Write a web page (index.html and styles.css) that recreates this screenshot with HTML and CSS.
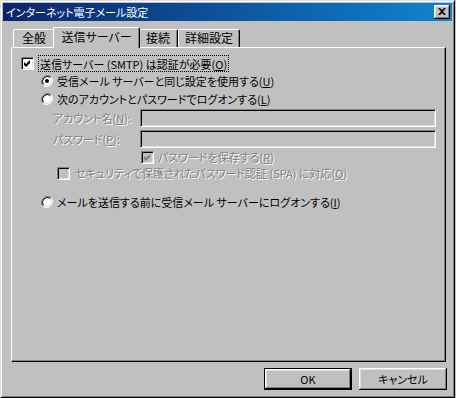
FILE: index.html
```html
<!DOCTYPE html>
<html lang="ja">
<head>
    <meta charset="UTF-8">
    <title>インターネット電子メール設定</title>
    <link rel="stylesheet" href="styles.css">
</head>
<body>
    <div class="window">
        <div class="titlebar">
            <span class="title">インターネット電子メール設定</span>
            <div class="close">
                <svg width="8" height="7" viewBox="0 0 8 7"><path d="M0 0h2l2 2 2-2h2L5 3.5 8 7H6L4 5 2 7H0l3-3.5z" fill="#000"/></svg>
            </div>
        </div>

        <div class="body">
            <div class="tabs">
                <div class="tab tab-general">全般</div>
                <div class="tab tab-send active">送信サーバー</div>
                <div class="tab tab-conn">接続</div>
                <div class="tab tab-adv">詳細設定</div>
            </div>

            <div class="panel">
                <div class="row">
                    <span class="check">
                        <svg width="7" height="7" viewBox="0 0 7 7"><path d="M0 2l2 2 4-4v3l-4 4-2-2z" fill="#000"/></svg>
                    </span>
                    <span class="focus">送信サーバー (SMTP) は認証が必要(<u>O</u>)</span>
                </div>

                <div class="row indent">
                    <span class="radio">
                        <svg width="12" height="12" viewBox="0 0 12 12">
                            <circle cx="6" cy="6" r="5" fill="#fff"/>
                            <path d="M1.8 10.2A6 6 0 0 1 10.2 1.8" fill="none" stroke="#808080"/>
                            <path d="M10.2 1.8A6 6 0 0 1 1.8 10.2" fill="none" stroke="#fff"/>
                            <path d="M2.5 9.5A5 5 0 0 1 9.5 2.5" fill="none" stroke="#000"/>
                            <path d="M9.5 2.5A5 5 0 0 1 2.5 9.5" fill="none" stroke="#dfdfdf"/>
                            <circle cx="6" cy="6" r="2" fill="#000"/>
                        </svg>
                    </span>
                    <span class="text">受信メール サーバーと同じ設定を使用する(<u>U</u>)</span>
                </div>

                <div class="row indent">
                    <span class="radio">
                        <svg width="12" height="12" viewBox="0 0 12 12">
                            <circle cx="6" cy="6" r="5" fill="#fff"/>
                            <path d="M1.8 10.2A6 6 0 0 1 10.2 1.8" fill="none" stroke="#808080"/>
                            <path d="M10.2 1.8A6 6 0 0 1 1.8 10.2" fill="none" stroke="#fff"/>
                            <path d="M2.5 9.5A5 5 0 0 1 9.5 2.5" fill="none" stroke="#000"/>
                            <path d="M9.5 2.5A5 5 0 0 1 2.5 9.5" fill="none" stroke="#dfdfdf"/>
                        </svg>
                    </span>
                    <span class="text">次のアカウントとパスワードでログオンする(<u>L</u>)</span>
                </div>

                <div class="field field-first">
                    <label class="disabled">アカウント名(<u>N</u>):</label>
                    <div class="input"></div>
                </div>
                <div class="field">
                    <label class="disabled">パスワード(<u>P</u>):</label>
                    <div class="input"></div>
                </div>

                <div class="row small save-row">
                    <span class="check off">
                        <svg width="7" height="7" viewBox="0 0 7 7"><path d="M0 2l2 2 4-4v3l-4 4-2-2z" fill="#808080"/></svg>
                    </span>
                    <span class="text disabled">パスワードを保存する(<u>R</u>)</span>
                </div>

                <div class="row small spa-row">
                    <span class="check off"></span>
                    <span class="text disabled">セキュリティで保護されたパスワード認証 (SPA) に対応(<u>Q</u>)</span>
                </div>

                <div class="row indent last-row">
                    <span class="radio">
                        <svg width="12" height="12" viewBox="0 0 12 12">
                            <circle cx="6" cy="6" r="5" fill="#fff"/>
                            <path d="M1.8 10.2A6 6 0 0 1 10.2 1.8" fill="none" stroke="#808080"/>
                            <path d="M10.2 1.8A6 6 0 0 1 1.8 10.2" fill="none" stroke="#fff"/>
                            <path d="M2.5 9.5A5 5 0 0 1 9.5 2.5" fill="none" stroke="#000"/>
                            <path d="M9.5 2.5A5 5 0 0 1 2.5 9.5" fill="none" stroke="#dfdfdf"/>
                        </svg>
                    </span>
                    <span class="text">メールを送信する前に受信メール サーバーにログオンする(<u>I</u>)</span>
                </div>
            </div>

            <div class="buttons">
                <div class="button default">OK</div>
                <div class="button">キャンセル</div>
            </div>
        </div>
    </div>
</body>
</html>
```

FILE: styles.css
```css
* {
    margin: 0;
    padding: 0;
    box-sizing: border-box;
}

body {
    background: #c0c0c0;
    font-family: "Noto Sans CJK JP", sans-serif;
    font-size: 11px;
    line-height: 14px;
    color: #000;
    font-feature-settings: "palt";
}

u {
    text-decoration: underline;
    text-underline-offset: 1px;
}

.window {
    width: 455px;
    height: 398px;
    background: #c0c0c0;
    border: 1px solid;
    border-color: #dfdfdf #000 #000 #dfdfdf;
    box-shadow: inset 1px 1px #fff, inset -1px -1px #808080;
    padding: 2px;
    display: flex;
    flex-direction: column;
}

.titlebar {
    height: 18px;
    background: linear-gradient(to right, #0a246a, #1084d0);
    display: flex;
    align-items: center;
    padding: 0 2px 0 3px;
}

.title {
    color: #fff;
}

.close {
    margin-left: auto;
    width: 16px;
    height: 14px;
    background: #c0c0c0;
    box-shadow: inset -1px -1px #000, inset 1px 1px #fff, inset -2px -2px #808080, inset 2px 2px #dfdfdf;
    display: flex;
    align-items: center;
    justify-content: center;
    padding-bottom: 1px;
}

.body {
    flex: 1;
    display: flex;
    flex-direction: column;
    padding: 6px 6px 0 8px;
}

/* tabs */
.tabs {
    display: flex;
    align-items: flex-end;
    padding-left: 2px;
}

.tab {
    height: 18px;
    background: #c0c0c0;
    border-top: 1px solid #fff;
    border-left: 1px solid #fff;
    border-right: 1px solid #000;
    border-radius: 2px 2px 0 0;
    box-shadow: inset -1px 0 #808080;
    text-align: center;
    font-size: 12px;
    padding-top: 1px;
}

.tab-general { width: 42px; }
.tab-send { width: 83px; }
.tab-conn { width: 40px; }
.tab-adv { width: 62px; }

.tab.active {
    width: 87px;
    height: 21px;
    margin: 0 -2px -1px;
    position: relative;
    z-index: 1;
    padding-top: 2px;
}

/* panel */
.panel {
    width: 435px;
    height: 315px;
    border: 1px solid;
    border-color: #fff #000 #000 #fff;
    box-shadow: inset -1px -1px #808080;
    padding: 6px 0 0 9px;
}

.row {
    display: flex;
    align-items: center;
    height: 18px;
}

.row.small {
    height: 16px;
}

.indent {
    margin-left: 20px;
}

.check {
    width: 13px;
    height: 13px;
    background: #fff;
    border: 1px solid;
    border-color: #808080 #fff #fff #808080;
    box-shadow: inset 1px 1px #000, inset -1px -1px #dfdfdf;
    display: flex;
    align-items: center;
    justify-content: center;
    flex-shrink: 0;
}

.check.off {
    background: #c0c0c0;
}

.focus {
    margin-left: 4px;
    border: 1px dotted #000;
    padding: 1px 1px 0;
    line-height: 14px;
}

.radio {
    width: 12px;
    height: 12px;
    display: flex;
    flex-shrink: 0;
}

.text {
    margin-left: 4px;
}

.disabled {
    color: #808080;
    text-shadow: 1px 1px 0 #fff;
}

.field {
    display: flex;
    align-items: center;
    margin-left: 32px;
    margin-top: 3px;
}

.field-first {
    margin-top: 1px;
}

.field label {
    width: 87px;
}

.input {
    width: 296px;
    height: 18px;
    border: 1px solid;
    border-color: #808080 #fff #fff #808080;
    box-shadow: inset 1px 1px #000, inset -1px -1px #dfdfdf;
    background: #c0c0c0;
}

.save-row {
    margin-left: 120px;
    margin-top: 1px;
}

.spa-row {
    margin-left: 36px;
}

.spa-row .text {
    margin-left: 5px;
}

.last-row {
    margin-top: 12px;
}

/* buttons */
.buttons {
    display: flex;
    justify-content: flex-end;
    gap: 7px;
    margin-top: 6px;
    margin-right: -1px;
}

.button {
    width: 88px;
    height: 22px;
    background: #c0c0c0;
    box-shadow: inset -1px -1px #000, inset 1px 1px #fff, inset -2px -2px #808080, inset 2px 2px #dfdfdf;
    display: flex;
    align-items: center;
    justify-content: center;
}

.button.default {
    border: 1px solid #000;
}
```
